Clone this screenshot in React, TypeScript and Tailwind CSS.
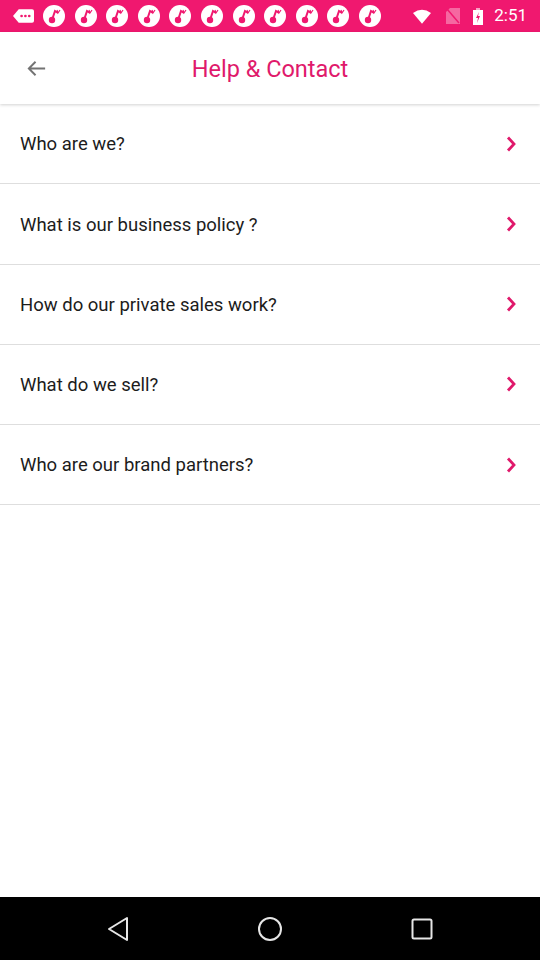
import React from "react";

const items = [
  "Who are we?",
  "What is our business policy ?",
  "How do our private sales work?",
  "What do we sell?",
  "Who are our brand partners?",
];

const AppIcon = () => (
  <svg width="22" height="22" viewBox="0 0 22 22">
    <circle cx="11" cy="11" r="11" fill="#fff" />
    <circle cx="9" cy="15" r="3.2" fill="#f0186f" />
    <path d="M9 15 L12 6 L15 8" stroke="#f0186f" strokeWidth="2" fill="none" />
    <path d="M14 5 l1 3 l2 -3" stroke="#f0186f" strokeWidth="1.2" fill="none" />
  </svg>
);

const StatusBar = () => (
  <div className="h-8 bg-[#f0186f] flex items-center pl-[13px] pr-[13px] text-white">
    <svg width="21" height="16" viewBox="0 0 22 16" className="mr-[9px]">
      <path d="M6 1 H20 a2 2 0 0 1 2 2 V13 a2 2 0 0 1 -2 2 H6 L0 8 Z" fill="#fff" />
      <circle cx="9" cy="8" r="1.4" fill="#f0186f" />
      <circle cx="13" cy="8" r="1.4" fill="#f0186f" />
      <circle cx="17" cy="8" r="1.4" fill="#f0186f" />
    </svg>
    <div className="flex gap-[9.6px]">
      {Array.from({ length: 11 }).map((_, i) => (
        <AppIcon key={i} />
      ))}
    </div>
    <div className="flex-1" />
    <svg width="18" height="15" viewBox="0 0 20 16" className="mr-[14px]">
      <path d="M0 4 Q10 -3 20 4 L10 16 Z" fill="#fff" />
    </svg>
    <svg width="16" height="16" viewBox="0 0 14 16" className="mr-[12px]">
      <path d="M4 0 H14 V16 H0 V4 Z" fill="#fff" opacity="0.35" />
      <path d="M1 1 L13 15" stroke="#f0186f" strokeWidth="1.5" />
    </svg>
    <svg width="10" height="17" viewBox="0 0 10 17" className="mr-[11px]">
      <rect x="3" y="0" width="4" height="2" fill="#fff" opacity="0.6" />
      <rect x="0" y="2" width="10" height="15" fill="#fff" />
      <path d="M6 4 L3 10 H5 L4 15 L7 8 H5 Z" fill="#f0186f" />
    </svg>
    <span className="text-[17px] font-['Roboto',sans-serif]">2:51</span>
  </div>
);

const Chevron = () => (
  <svg width="14" height="16" viewBox="0 0 14 16" fill="none" stroke="#e0196b" strokeWidth="2.8">
    <path d="M4 1.5 L10 8 L4 14.5" />
  </svg>
);

export default function App() {
  return (
    <div className="w-[540px] h-[960px] flex flex-col bg-white font-['Roboto',sans-serif]">
      <StatusBar />
      <div className="h-[72px] flex items-center relative shadow-[0_1px_3px_rgba(0,0,0,0.18)] z-10">
        <svg width="23" height="23" viewBox="0 0 24 24" className="ml-[25px]" fill="none" stroke="#737373" strokeWidth="2">
          <path d="M21 12 H4 M11 5 L4 12 L11 19" />
        </svg>
        <span className="absolute left-0 right-0 pt-[4px] text-center text-[23.5px] text-[#e0196b] pointer-events-none">
          Help &amp; Contact
        </span>
      </div>
      <div className="flex flex-col">
        {items.map((t) => (
          <div key={t} className="h-[80.25px] flex items-center pl-5 pr-[22px] border-b border-[#dedede] text-[18.5px] text-[#1c1c1c]">
            <span className="flex-1 pt-[3px]">{t}</span>
            <Chevron />
          </div>
        ))}
      </div>
      <div className="flex-1" />
      <div className="h-[63px] bg-black flex items-center justify-center gap-[128px]">
        <svg width="22" height="26" viewBox="0 0 22 26" fill="none" stroke="#e6e6e6" strokeWidth="2" strokeLinejoin="round">
          <path d="M20 2 V24 L2 13 Z" />
        </svg>
        <svg width="26" height="26" viewBox="0 0 26 26" fill="none" stroke="#e6e6e6" strokeWidth="2">
          <circle cx="13" cy="13" r="11" />
        </svg>
        <svg width="22" height="22" viewBox="0 0 22 22" fill="none" stroke="#e6e6e6" strokeWidth="2">
          <rect x="1.5" y="1.5" width="19" height="19" rx="1.5" />
        </svg>
      </div>
    </div>
  );
}
